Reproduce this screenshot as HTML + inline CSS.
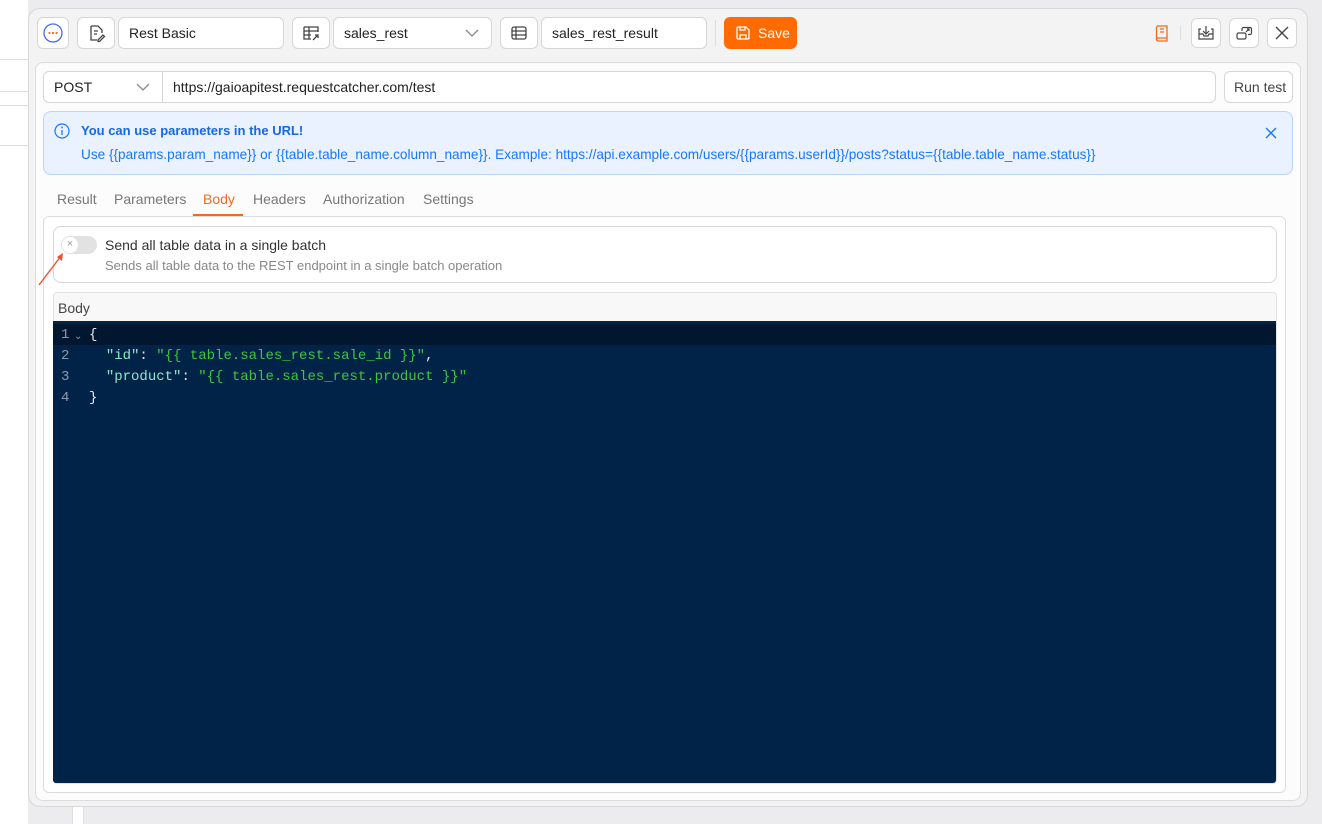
<!DOCTYPE html>
<html><head><meta charset="utf-8"><style>
*{box-sizing:border-box;margin:0;padding:0}
body{width:1322px;height:824px;overflow:hidden;background:#ececef;font-family:"Liberation Sans",sans-serif;font-size:14px;color:#333;position:relative}
.a{position:absolute}
.btn{position:absolute;background:#fff;border:1px solid #d6d6d6;border-radius:6px}
.inp{position:absolute;background:#fff;border:1px solid #d6d6d6;border-radius:6px;padding-left:10px;line-height:30px;font-size:14px;color:#222}
.tab{position:absolute;top:191px;font-size:14px;color:#777}
.code{font-family:"Liberation Mono",monospace;font-size:14px;line-height:21px}
</style></head><body>
<div class="a" style="left:0;top:0;width:28px;height:824px;background:#fff"></div>
<div class="a" style="left:0;top:59px;width:28px;height:1px;background:#ddd"></div>
<div class="a" style="left:0;top:91px;width:28px;height:1px;background:#ddd"></div>
<div class="a" style="left:0;top:105px;width:28px;height:1px;background:#ddd"></div>
<div class="a" style="left:0;top:145px;width:28px;height:1px;background:#ddd"></div>
<div class="a" style="left:72px;top:806px;width:12px;height:18px;background:#fff;border-left:1px solid #ddd;border-right:1px solid #ddd"></div>
<!-- modal -->
<div class="a" style="left:28px;top:8px;width:1280px;height:799px;background:#f3f3f3;border:1px solid #d8d8d8;border-radius:12px"></div>
<!-- header -->
<div class="btn" style="left:37px;top:17px;width:32px;height:32px"><svg width="30" height="30" viewBox="0 0 30 30"><circle cx="15" cy="15" r="9" fill="none" stroke="#4a6cf0" stroke-width="1.3"/><circle cx="11.5" cy="15" r="1.1" fill="#f26b1d"/><circle cx="15" cy="15" r="1.1" fill="#f26b1d"/><circle cx="18.5" cy="15" r="1.1" fill="#f26b1d"/></svg></div>
<div class="btn" style="left:77px;top:17px;width:38px;height:32px"><svg width="36" height="30" viewBox="0 0 36 30"><path d="M13 8h7l4 4v3M13 8v14h6M16 13h4M16 16h3M20 22l5-5 1.5 1.5-5 5H20z" fill="none" stroke="#444" stroke-width="1.3"/></svg></div>
<div class="inp" style="left:118px;top:17px;width:166px;height:32px">Rest Basic</div>
<div class="btn" style="left:292px;top:17px;width:38px;height:32px"><svg width="36" height="30" viewBox="0 0 36 30"><path d="M11 9h14v5M11 9v12h7M11 13h14M11 17h7M16 9v12M20 22l5-5M22 17h3v3" fill="none" stroke="#444" stroke-width="1.3"/></svg></div>
<div class="inp" style="left:333px;top:17px;width:159px;height:32px">sales_rest<svg class="a" style="right:12px;top:10px" width="14" height="10"><path d="M1 2l6 6 6-6" fill="none" stroke="#888" stroke-width="1.3"/></svg></div>
<div class="btn" style="left:500px;top:17px;width:38px;height:32px"><svg width="36" height="30" viewBox="0 0 36 30"><rect x="11" y="9" width="14" height="12" rx="2" fill="none" stroke="#444" stroke-width="1.3"/><path d="M11 13h14M11 17h14M15 9v12" stroke="#444" stroke-width="1.3"/></svg></div>
<div class="inp" style="left:541px;top:17px;width:166px;height:32px">sales_rest_result</div>
<div class="a" style="left:715px;top:20px;width:1px;height:26px;background:#ddd"></div>
<div class="a" style="left:724px;top:17px;width:73px;height:32px;background:#ff6b00;border-radius:6px;color:#fff;line-height:32px;padding-left:34px">Save<svg class="a" style="left:11px;top:8px" width="16" height="16"><path d="M2 3a1 1 0 011-1h8l3 3v8a1 1 0 01-1 1H3a1 1 0 01-1-1z M5 2v3h5V2M5 14v-4h6v4" fill="none" stroke="#fff" stroke-width="1.3"/></svg></div>
<svg class="a" style="left:1154px;top:24px" width="16" height="18"><path d="M3 2h10v12H4a1.5 1.5 0 00-1.5 1.5V3.5A1.5 1.5 0 014 2zM2.5 15.5A1.5 1.5 0 004 17h9v-3M6 5h4M6 8h4" fill="none" stroke="#f26b1d" stroke-width="1.3"/></svg>
<div class="a" style="left:1180px;top:26px;width:1px;height:14px;background:#ddd"></div>
<div class="btn" style="left:1191px;top:18px;width:30px;height:30px"><svg width="28" height="28"><path d="M7 15v5h14v-5h-4l-1 2h-4l-1-2zM14 7v8M11 12l3 3 3-3M9 10H7v5M19 10h2v5" fill="none" stroke="#444" stroke-width="1.2"/></svg></div>
<div class="btn" style="left:1229px;top:18px;width:30px;height:30px"><svg width="28" height="28"><rect x="7" y="14" width="9" height="6" rx="1.5" fill="none" stroke="#444" stroke-width="1.2"/><path d="M12 12V10a1.5 1.5 0 011.5-1.5H20a1.5 1.5 0 011.5 1.5v4a1.5 1.5 0 01-1.5 1.5h-2M16 13l3-3M17 10h2v2" fill="none" stroke="#444" stroke-width="1.2"/></svg></div>
<div class="btn" style="left:1267px;top:18px;width:30px;height:30px"><svg width="28" height="28"><path d="M8 8l12 12M20 8L8 20" stroke="#444" stroke-width="1.4"/></svg></div>
<!-- inner panel -->
<div class="a" style="left:35px;top:62px;width:1266px;height:739px;background:#fcfcfc;border:1px solid #dcdcdc;border-radius:8px"></div>
<div class="inp" style="left:43px;top:71px;width:120px;height:32px;border-radius:6px 0 0 6px">POST<svg class="a" style="right:12px;top:10px" width="14" height="10"><path d="M1 2l6 6 6-6" fill="none" stroke="#888" stroke-width="1.3"/></svg></div>
<div class="inp" style="left:162px;top:71px;width:1054px;height:32px;border-radius:0 6px 6px 0">https://gaioapitest.requestcatcher.com/test</div>
<div class="inp" style="left:1224px;top:71px;width:69px;height:32px;padding-left:9px;color:#444">Run test</div>
<div class="a" style="left:43px;top:111px;width:1250px;height:64px;background:#e9f2fe;border:1px solid #b8d5fb;border-radius:8px;color:#1677ff"></div>
<svg class="a" style="left:53px;top:122px" width="18" height="18"><circle cx="9" cy="9" r="7" fill="none" stroke="#1677ff" stroke-width="1.2"/><path d="M9 8v5" stroke="#1677ff" stroke-width="1.3"/><circle cx="9" cy="5.5" r=".9" fill="#1677ff"/></svg>
<div class="a" style="left:81px;top:123px;color:#1668e3;font-size:13px;font-weight:bold">You can use parameters in the URL!</div>
<div class="a" style="left:81px;top:147px;color:#1677ff;font-size:13.6px">Use {{params.param_name}} or {{table.table_name.column_name}}. Example: https://api.example.com/users/{{params.userId}}/posts?status={{table.table_name.status}}</div>
<svg class="a" style="left:1264px;top:126px" width="14" height="14"><path d="M2 2l10 10M12 2L2 12" stroke="#1677ff" stroke-width="1.4"/></svg>
<div class="tab" style="left:57px">Result</div>
<div class="tab" style="left:114px">Parameters</div>
<div class="tab" style="left:203px;color:#f26b1d">Body</div>
<div class="a" style="left:193px;top:214px;width:50px;height:2px;background:#f26b1d"></div>
<div class="tab" style="left:253px">Headers</div>
<div class="tab" style="left:323px">Authorization</div>
<div class="tab" style="left:423px">Settings</div>
<div class="a" style="left:43px;top:216px;width:1243px;height:577px;border:1px solid #dcdcdc;border-radius:6px;background:#fff"></div>
<div class="a" style="left:53px;top:226px;width:1224px;height:57px;border:1px solid #d6d6d6;border-radius:8px;background:#fff"></div>
<div class="a" style="left:61px;top:236px;width:36px;height:18px;border-radius:9px;background:#e2e2e2"></div>
<div class="a" style="left:62px;top:237px;width:16px;height:16px;border-radius:8px;background:#fff;text-align:center;line-height:15px;font-size:11px;color:#999">×</div>
<svg class="a" style="left:36px;top:250px" width="32" height="38"><path d="M3 35L25 6" stroke="#f0502a" stroke-width="1.4"/><path d="M27 3l-1 8-5-4z" fill="#f0502a"/></svg>
<div class="a" style="left:105px;top:237px;font-size:14px;color:#333">Send all table data in a single batch</div>
<div class="a" style="left:105px;top:258px;font-size:13px;color:#888">Sends all table data to the REST endpoint in a single batch operation</div>
<div class="a" style="left:53px;top:292px;width:1224px;height:492px;border:1px solid #e2e2e2;border-radius:4px;background:#f8f8f8"></div>
<div class="a" style="left:58px;top:300px;font-size:14px;color:#444">Body</div>
<div class="a" style="left:53px;top:321px;width:1223px;height:462px;background:#012347;border-radius:0 0 3px 3px"></div>
<div class="a" style="left:53px;top:324px;width:1223px;height:21px;background:#011730"></div>
<div class="a code" style="left:61px;top:325px;color:#8a9bb0">1<br>2<br>3<br>4</div>
<div class="a" style="left:74px;top:331px;color:#8a9bb0;font-size:10px">⌄</div>
<div class="a code" style="left:89px;top:325px;color:#e8e8e8;white-space:pre">{
  <span style="color:#8ee8c8">"id"</span>: <span style="color:#3cc83c">"{{ table.sales_rest.sale_id }}"</span>,
  <span style="color:#8ee8c8">"product"</span>: <span style="color:#3cc83c">"{{ table.sales_rest.product }}"</span>
}</div>
</body></html>
